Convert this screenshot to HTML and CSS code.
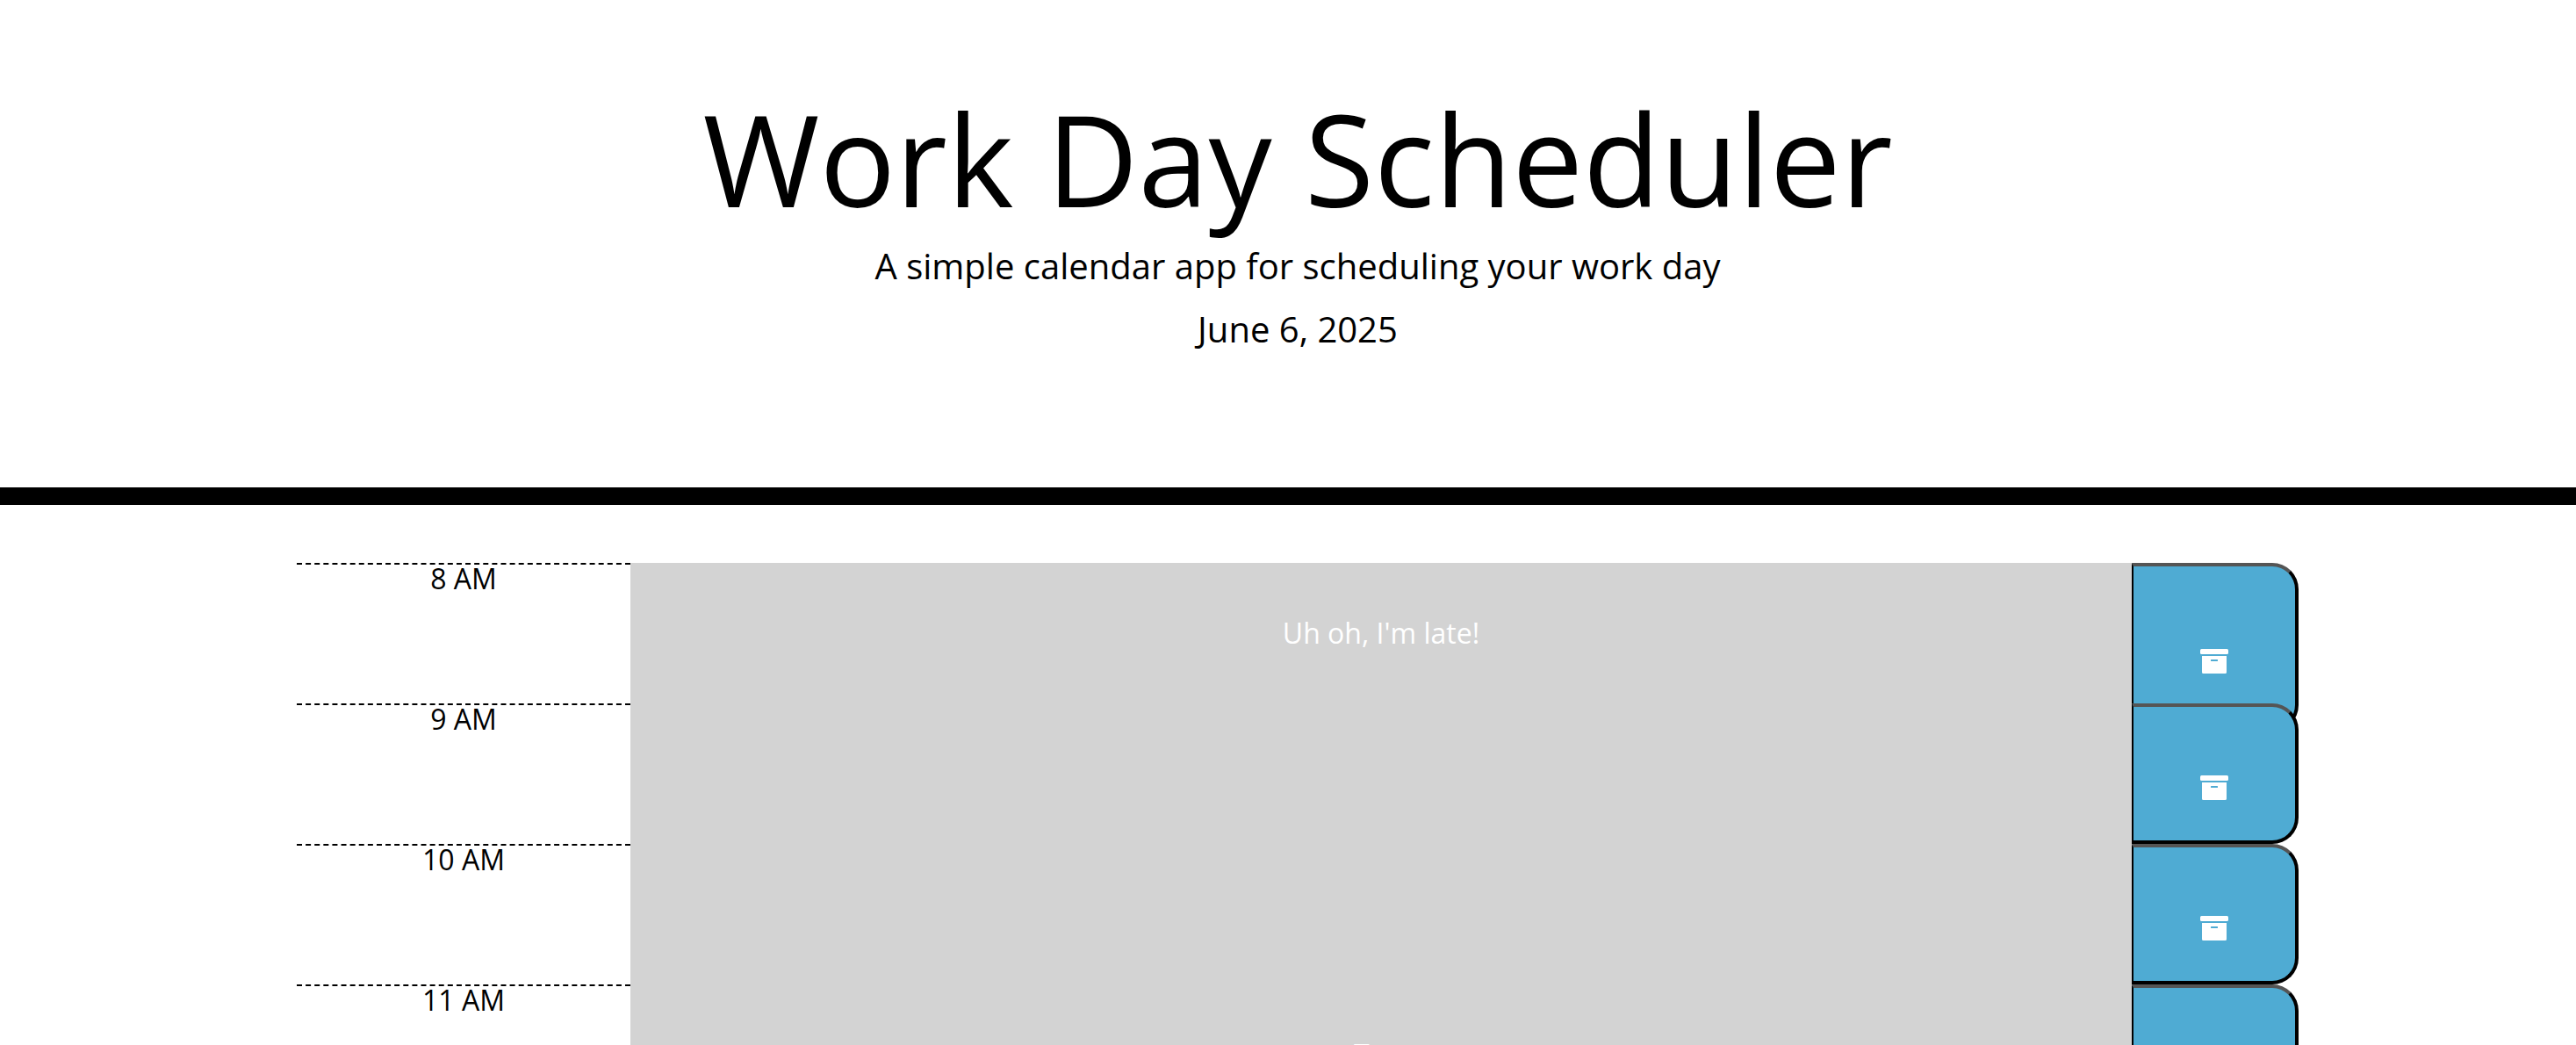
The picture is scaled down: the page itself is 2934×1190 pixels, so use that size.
FILE: index.html
```html
<!DOCTYPE html>
<html lang="en">
<head>
  <meta charset="utf-8">
  <meta name="viewport" content="width=device-width, initial-scale=1">
  <title>Work Day Scheduler</title>
  <link rel="stylesheet" href="styles.css">
</head>
<body>
  <svg class="sprite" aria-hidden="true">
    <symbol id="archive" viewBox="0 0 32 28">
      <path fill-rule="evenodd" d="M2 8H30V26.500Q30 28 28.500 28H3.500Q2 28 2 26.500ZM12.500 12Q12 12 12 12.500V13.500Q12 14 12.500 14H19.500Q20 14 20 13.500V12.500Q20 12 19.500 12Z"/>
      <rect width="32" height="6" rx="1.500"/>
    </symbol>
  </svg>

  <header class="header">
    <h1 class="title">Work Day Scheduler</h1>
    <p class="lead">A simple calendar app for scheduling your work day</p>
    <p class="lead">June 6, 2025</p>
  </header>

  <main class="schedule">
    <div class="container">
      <div class="row">
        <label class="hour" for="hour-8">8 AM</label>
        <textarea class="description" id="hour-8">Uh oh, I'm late!</textarea>
        <button class="save save-tall" type="button" aria-label="Save 8 AM"><svg class="icon"><use href="#archive"/></svg></button>
      </div>
      <div class="row">
        <label class="hour" for="hour-9">9 AM</label>
        <textarea class="description" id="hour-9"></textarea>
        <button class="save" type="button" aria-label="Save 9 AM"><svg class="icon"><use href="#archive"/></svg></button>
      </div>
      <div class="row">
        <label class="hour" for="hour-10">10 AM</label>
        <textarea class="description" id="hour-10"></textarea>
        <button class="save" type="button" aria-label="Save 10 AM"><svg class="icon"><use href="#archive"/></svg></button>
      </div>
      <div class="row">
        <label class="hour" for="hour-11">11 AM</label>
        <textarea class="description" id="hour-11">Test</textarea>
        <button class="save" type="button" aria-label="Save 11 AM"><svg class="icon"><use href="#archive"/></svg></button>
      </div>
    </div>
  </main>
</body>
</html>
```

FILE: styles.css
```css
* {
  box-sizing: border-box;
}

body {
  display: flex;
  flex-direction: column;
  height: 100vh;
  margin: 0;
  overflow: hidden;
  background: #fff;
  color: #000;
  font-family: "Open Sans", sans-serif;
  font-size: 32px;
  line-height: 32px;
}

.sprite {
  display: none;
}

.header {
  flex: none;
  padding: 96px 0 150px 22px;
  border-bottom: 20px solid #000;
  text-align: center;
}

.title {
  margin: 0 0 9px;
  font-size: 144px;
  font-weight: 400;
  line-height: 168px;
}

.lead {
  margin: 0;
  font-size: 40px;
  line-height: 60px;
}

.lead + .lead {
  margin-top: 12px;
}

.schedule {
  flex: 1;
  min-height: 0;
  padding: 66px 0 0 22px;
  overflow: hidden;
}

.container {
  max-width: 2280px;
  margin: 0 auto;
}

.row {
  display: grid;
  grid-template-columns: 2fr 9fr 1fr;
  align-items: start;
  height: 160px;
}

.hour {
  height: 100%;
  border-top: 2px dashed #000;
  text-align: center;
}

.description {
  width: 100%;
  height: 100%;
  padding: 56px 24px 0;
  border: 0;
  outline: 0;
  resize: none;
  overflow: hidden;
  background: #d3d3d3;
  color: #fff;
  font: inherit;
  line-height: 48px;
  text-align: center;
}

.save {
  display: flex;
  align-items: center;
  justify-content: center;
  width: 100%;
  height: 160px;
  padding: 32px 0 0;
  border: 4px solid #000;
  border-top-color: #555;
  border-left-width: 2px;
  border-radius: 0 30px 30px 0;
  background: #4fabd3;
  color: #fff;
  cursor: pointer;
}

.save-tall {
  height: 192px;
}

.icon {
  width: 32px;
  height: 28px;
  fill: currentColor;
}
```
